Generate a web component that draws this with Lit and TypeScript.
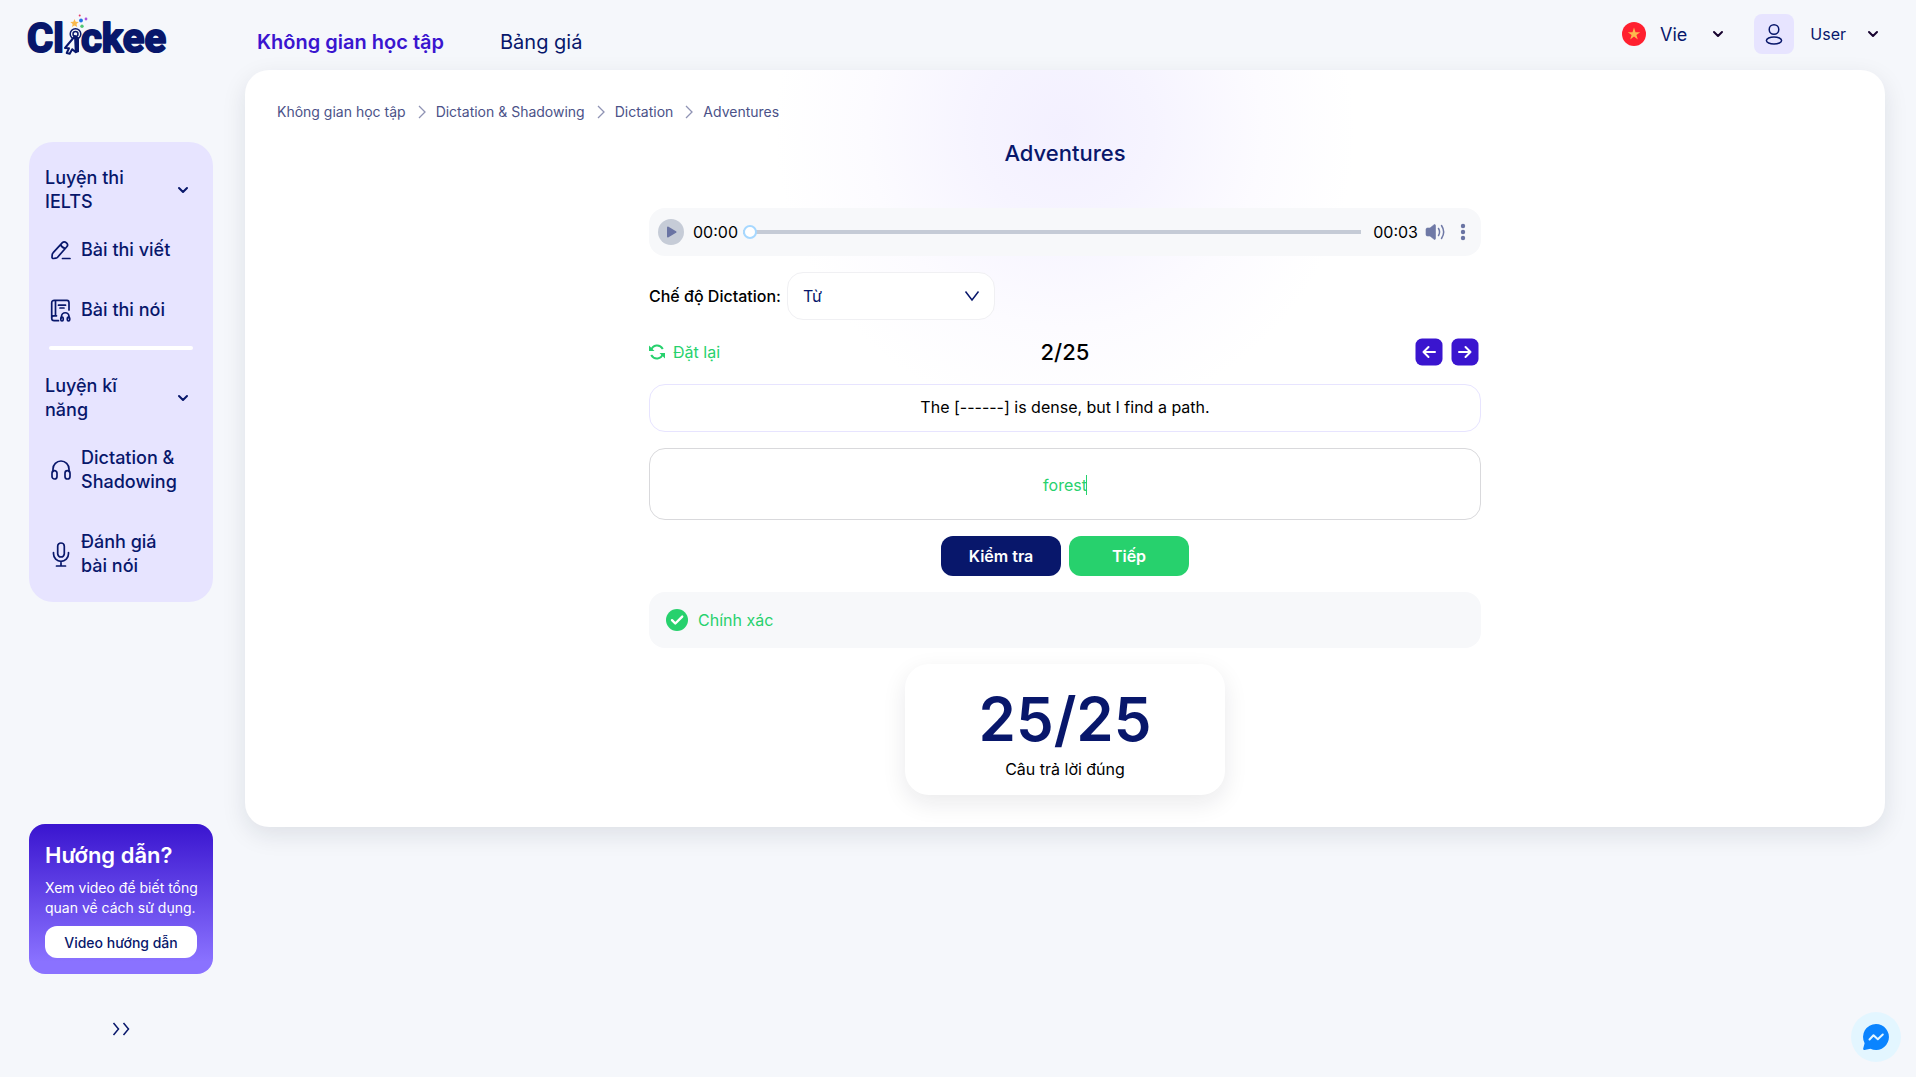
import { LitElement, html, css, svg } from "lit";
import { customElement, state } from "lit/decorators.js";

const chevronDown = html`<svg class="chev" viewBox="0 0 12 12" width="12" height="12" aria-hidden="true">
  <path d="M2 4l4 4 4-4" fill="none" stroke="currentColor" stroke-width="2" stroke-linecap="round" stroke-linejoin="round" />
</svg>`;

const icons: Record<string, unknown> = {
  pen: svg`<path d="M2.200 12.600 11.400 2.600a2.600 2.600 0 0 1 3.700 0l.6.6a2.600 2.600 0 0 1 .1 3.600L6.600 17.200c-.5.6-1 .8-1.700.9l-2.400.4c-.9.1-1.600-.5-1.500-1.400l.2-2.400c.1-.8.4-1.500 1-2.100ZM9.700 4.500c.6 2 2.200 3.500 4.400 3.900M11.500 18.500h7.500"/>`,
  book: svg`<path d="M18 10V2.800C18 1.400 17.300.3 16 .3H3.500C1.500.3.700 1.300.7 3v15.200M4.500.3v15.500M.7 18c0-1.300.9-2.200 2.200-2.200H5.500M.7 18c0 1.600.9 2.700 2.400 2.700H7.500M7.500 5.200h7M9 8h4M10.500 18v-1.500a3.700 3.700 0 0 1 7.500 0V18"/><rect x="9.800" y="17" width="2.400" height="4" rx="1.200"/><rect x="16.300" y="17" width="2.400" height="4" rx="1.200"/>`,
  headphones: svg`<path d="M2 11.500V9a8 8 0 0 1 16 0v2.500"/><rect x="1" y="10.700" width="5" height="8.300" rx="2.500"/><rect x="14" y="10.700" width="5" height="8.300" rx="2.500"/>`,
  mic: svg`<rect x="6.700" y="-1" width="6.600" height="14" rx="3.300"/><path d="M2.500 8.500v1.300a7.500 7.500 0 0 0 15 0V8.500M10 17.300v4.500M5.500 22h9"/>`,
};

interface MenuGroup {
  title: string;
  items: { icon: string; label: string }[];
}

const menu: MenuGroup[] = [
  {
    title: "Luyện thi IELTS",
    items: [
      { icon: "pen", label: "Bài thi viết" },
      { icon: "book", label: "Bài thi nói" },
    ],
  },
  {
    title: "Luyện kĩ năng",
    items: [
      { icon: "headphones", label: "Dictation & Shadowing" },
      { icon: "mic", label: "Đánh giá bài nói" },
    ],
  },
];

const base = css`
  *,
  *::before,
  *::after {
    box-sizing: border-box;
  }
  button,
  input,
  select {
    font: inherit;
    color: inherit;
    margin: 0;
  }
  button {
    background: none;
    border: 0;
    padding: 0;
    cursor: pointer;
  }
  a {
    color: inherit;
    text-decoration: none;
  }
  svg {
    display: block;
    flex: none;
    overflow: visible;
  }
`;

@customElement("clickee-header")
class ClickeeHeader extends LitElement {
  static styles = [
    base,
    css`
      :host {
        display: grid;
        grid-template-columns: 245px 1fr auto;
        height: 70px;
        padding-right: 37px;
      }
      .logo {
        display: flex;
        align-items: flex-start;
        padding: 10px 0 0 27px;
      }
      .word {
        font: 700 40px/50px Roboto, "Liberation Sans", sans-serif;
        fill: var(--navy);
        stroke: var(--navy);
        stroke-width: 2px;
        stroke-linejoin: round;
      }
      nav {
        display: flex;
        gap: 56px;
        padding: 27px 0 0 12px;
        font-size: 20px;
        line-height: 30px;
      }
      .active {
        color: var(--violet);
        font-weight: 600;
      }
      .account {
        display: flex;
        gap: 30px;
        padding-top: 14px;
      }
      .drop {
        display: flex;
        align-items: center;
        height: 40px;
        gap: 16px;
        font-size: 16px;
      }
      .chev {
        color: #17032f;
        margin-left: 5px;
      }
      .lang {
        gap: 14px;
        font-size: 18px;
      }
      .lang .chev {
        margin-left: 11px;
      }
      .avatar {
        display: grid;
        place-items: center;
        width: 40px;
        height: 40px;
        border-radius: 8px;
        background: var(--lilac);
      }
    `,
  ];

  render() {
    return html`
      <a class="logo" href="#" aria-label="Clickee">
        <svg width="144" height="50" viewBox="0 0 144 50">
          <text class="word" x="0" y="42">Cl</text>
          <text class="word" x="54" y="42">ckee</text>
          <g fill="none" stroke="#08176b" stroke-width="1.500">
            <circle cx="48.500" cy="24" r="5.300" />
            <circle cx="48.500" cy="24" r="2.500" />
            <path d="M48 26 38 38l4 .3-2.300 4.700 3 .8 2.500-4.600 3.600 3Z" fill="#f5f7fb" stroke-width="2" stroke-linejoin="round" />
          </g>
          <path d="M49 26l3 1.500V42l-3 1Z" fill="#08176b" />
          <path d="m47.500 9 1.200 2.700 3 .3-2.200 2 .7 3-2.700-1.600L45 17l.6-3-2.300-2 3-.3Z" fill="#f9b84b" />
          <circle cx="54" cy="10.500" r="1.900" fill="#1f74e8" />
          <circle cx="55" cy="16.200" r="1.700" fill="#51c774" />
          <circle cx="59" cy="9" r="1.400" fill="#a955df" />
          <circle cx="52.700" cy="5.500" r="1" fill="#e63a66" />
        </svg>
      </a>
      <nav>
        <a class="active" href="#learn">Không gian học tập</a>
        <a href="#pricing">Bảng giá</a>
      </nav>
      <div class="account">
        <button class="drop lang">
          <svg width="24" height="24" viewBox="0 0 24 24" aria-hidden="true">
            <circle cx="12" cy="12" r="12" fill="#ff202f" />
            <path d="m12 5.600 1.500 4.600h4.700l-3.800 2.700 1.400 4.500-3.800-2.800-3.800 2.800 1.400-4.500-3.800-2.700h4.700Z" fill="#fdb94d" />
          </svg>
          Vie ${chevronDown}
        </button>
        <button class="drop">
          <span class="avatar">
            <svg width="18" height="22" viewBox="0 0 18 22" fill="none" stroke="#08176b" stroke-width="1.500" aria-hidden="true">
              <circle cx="9" cy="6.500" r="4.800" />
              <ellipse cx="9" cy="17.500" rx="7.600" ry="3.600" />
            </svg>
          </span>
          User ${chevronDown}
        </button>
      </div>
    `;
  }
}

@customElement("clickee-sidebar")
class ClickeeSidebar extends LitElement {
  static styles = [
    base,
    css`
      :host {
        display: flex;
        flex-direction: column;
        padding: 72px 32px 24px 29px;
      }
      .menu {
        padding: 0 16px;
        border-radius: 24px;
        background: var(--lilac);
        font-size: 18px;
        font-weight: 500;
        line-height: 24px;
      }
      .group {
        padding: 24px 0 6px;
      }
      .group + .group::before {
        content: "";
        display: block;
        height: 4px;
        margin: -24px 4px 24px;
        border-radius: 2px;
        background: #fff;
      }
      .title {
        display: flex;
        align-items: center;
        gap: 20px;
        width: 100%;
        padding-right: 8px;
        margin-bottom: 6px;
        text-align: left;
      }
      .title span {
        flex: 1;
      }
      .item {
        display: flex;
        align-items: center;
        gap: 10px;
        padding: 18px 16px 18px 6px;
      }
      .guide {
        margin-top: auto;
        display: flex;
        flex-direction: column;
        gap: 8px;
        padding: 16px;
        border-radius: 16px;
        background: linear-gradient(#3a15cf, #8a72ff 92%);
        color: #fff;
      }
      h2,
      p {
        margin: 0;
      }
      h2 {
        font-size: 22px;
        font-weight: 600;
        line-height: 30px;
      }
      p {
        font-size: 14px;
        line-height: 20px;
        white-space: nowrap;
      }
      .video {
        height: 32px;
        border-radius: 12px;
        background: #fff;
        color: var(--navy);
        font-size: 14px;
        font-weight: 500;
      }
      .collapse {
        display: grid;
        place-items: center;
        height: 48px;
        margin-top: 31px;
      }
    `,
  ];

  render() {
    return html`
      <nav class="menu">
        ${menu.map(
          (group) => html`<div class="group">
            <button class="title"><span>${group.title}</span>${chevronDown}</button>
            ${group.items.map(
              (item) => html`<a class="item" href="#">
                <svg width="20" height="20" viewBox="0 0 20 20" fill="none" stroke="currentColor" stroke-width="1.700" stroke-linecap="round" stroke-linejoin="round" aria-hidden="true">${icons[item.icon]}</svg>
                <span>${item.label}</span>
              </a>`
            )}
          </div>`
        )}
      </nav>
      <section class="guide">
        <h2>Hướng dẫn?</h2>
        <p>Xem video để biết tổng<br />quan về cách sử dụng.</p>
        <button class="video">Video hướng dẫn</button>
      </section>
      <button class="collapse" aria-label="Mở rộng">
        <svg width="18" height="12" viewBox="0 0 18 12" fill="none" stroke="#08176b" stroke-width="1.500">
          <path d="m1.500 0 5 6-5 6M11.500 0l5 6-5 6" />
        </svg>
      </button>
    `;
  }
}

@customElement("dictation-panel")
class DictationPanel extends LitElement {
  static styles = [
    base,
    css`
      :host {
        display: block;
        padding: 32px;
        border-radius: 24px;
        background: radial-gradient(circle 290px at 50% 60px, #f3f0ff, #f6f4ff 30%, #fcfbff 68%, #fff) #fff;
        box-shadow: 0 8px 24px rgba(20, 25, 50, 0.1);
        color: #000;
        font-size: 16px;
        line-height: 24px;
      }
      .crumbs {
        display: flex;
        align-items: center;
        font-size: 14px;
        line-height: 20px;
        color: #4b5288;
      }
      h1 {
        margin: 16px 0 40px;
        text-align: center;
        font-size: 22px;
        line-height: 30px;
        font-weight: 500;
        color: var(--navy);
      }
      .exercise {
        display: flex;
        flex-direction: column;
        gap: 16px;
        max-width: 832px;
        margin: 0 auto;
      }
      .player {
        display: flex;
        align-items: center;
        height: 48px;
        padding: 0 15px 0 9px;
        border-radius: 16px;
        background: #f7f8fa;
      }
      .time {
        margin: 0 5px 0 9px;
      }
      .total {
        margin: 0 7px 0 12px;
      }
      .seek {
        flex: 1;
        min-width: 0;
        height: 14px;
        appearance: none;
        background: linear-gradient(#c5cbd6, #c5cbd6) center / 100% 4px no-repeat;
        border-radius: 2px;
      }
      .seek::-webkit-slider-thumb {
        appearance: none;
        width: 14px;
        height: 14px;
        border: 2px solid #a6d8ff;
        border-radius: 50%;
        background: #fff;
      }
      .more {
        margin-left: 15px;
      }
      .mode {
        display: flex;
        align-items: center;
        gap: 6px;
      }
      .mode label {
        font-weight: 500;
      }
      .picker {
        display: grid;
        align-items: center;
        width: 208px;
      }
      .picker > * {
        grid-area: 1 / 1;
      }
      select {
        appearance: none;
        width: 100%;
        height: 48px;
        padding: 0 15px;
        border: 1px solid #f0f0f3;
        border-radius: 16px;
        background: #fff;
        color: var(--navy);
      }
      .picker svg {
        justify-self: end;
        margin-right: 16px;
        pointer-events: none;
      }
      .bar {
        display: grid;
        grid-template-columns: 1fr auto 1fr;
        align-items: center;
        height: 32px;
      }
      .reset {
        display: flex;
        align-items: center;
        gap: 8px;
        color: var(--green);
        justify-self: start;
      }
      .count {
        font-size: 22px;
        font-weight: 500;
      }
      .steps {
        display: flex;
        gap: 4px;
        justify-self: end;
      }
      .sentence {
        margin: 0;
        padding: 10px 12px 12px;
        border: 1px solid var(--lilac);
        border-radius: 16px;
        background: #fff;
        text-align: center;
      }
      .field {
        position: relative;
        display: flex;
      }
      .answer {
        width: 100%;
        height: 72px;
        padding: 2px 12px 0;
        border: 1px solid #d9d9dc;
        border-radius: 16px;
        outline: 0;
        background: #fff;
        text-align: center;
        color: var(--green);
      }
      .caret {
        position: absolute;
        left: calc(50% + 21px);
        top: 27px;
        width: 1px;
        height: 20px;
        background: var(--green);
      }
      .actions {
        display: flex;
        justify-content: center;
        gap: 8px;
      }
      .action {
        width: 120px;
        height: 40px;
        border-radius: 12px;
        background: var(--navy);
        color: #fff;
        font-weight: 600;
      }
      .next {
        background: var(--green);
      }
      .result {
        display: flex;
        align-items: center;
        gap: 9px;
        padding: 16px;
        border-radius: 16px;
        background: #f7f8fa;
        color: var(--green);
      }
      .score {
        width: 320px;
        align-self: center;
        padding: 18px 16px 14px;
        border-radius: 24px;
        background: #fff;
        box-shadow: 0 8px 24px rgba(20, 20, 40, 0.09);
        text-align: center;
      }
      .score strong {
        display: block;
        font-size: 60px;
        line-height: 75px;
        font-weight: 600;
        color: var(--navy);
      }
    `,
  ];

  @state() private answer = "forest";

  private crumbs = ["Không gian học tập", "Dictation & Shadowing", "Dictation", "Adventures"];

  private stepButton(label: string, path: string) {
    return html`<button aria-label=${label}>
      <svg width="32" height="32" viewBox="0 0 32 32" fill="none">
        <rect x="2.500" y="2.500" width="27" height="27" rx="6.500" fill="#3a15cf" />
        <path d=${path} stroke="#fff" stroke-width="2" stroke-linecap="round" stroke-linejoin="round" />
      </svg>
    </button>`;
  }

  render() {
    return html`
      <nav class="crumbs">
        ${this.crumbs.map(
          (crumb, i) => html`${i
              ? html`<svg width="30" height="14" viewBox="0 0 30 14" fill="none" stroke="#8f93b4" stroke-width="1.300" aria-hidden="true"><path d="m13 1 6 6-6 6" /></svg>`
              : ""}<a href="#">${crumb}</a>`
        )}
      </nav>
      <h1>Adventures</h1>
      <div class="exercise">
        <div class="player">
          <button aria-label="Phát">
            <svg width="26" height="26" viewBox="0 0 26 26">
              <circle cx="13" cy="13" r="13" fill="#c6ccd7" />
              <path d="M10 8.500 17.500 13 10 17.500Z" fill="#6a74a3" stroke="#6a74a3" stroke-width="2" stroke-linejoin="round" />
            </svg>
          </button>
          <span class="time">00:00</span>
          <input class="seek" type="range" min="0" max="3" value="0" aria-label="Vị trí phát" />
          <span class="total">00:03</span>
          <button aria-label="Âm lượng">
            <svg width="20" height="18" viewBox="0 0 20 18" fill="none" stroke="#6f79a6" stroke-width="1.500" stroke-linecap="round">
              <path d="M1 6.500C1 5.500 1.500 5 2.500 5H5l4-3.200c.8-.6 1.500-.2 1.500.7v13c0 .9-.7 1.300-1.500.7L5 13H2.500C1.500 13 1 12.500 1 11.500Z" fill="#6f79a6" stroke="#6f79a6" stroke-width=".6" />
              <path d="M13.500 5.500c1.400 2.300 1.400 4.700 0 7M16.500 2.500c2.900 4.300 2.900 8.700 0 13" />
            </svg>
          </button>
          <button class="more" aria-label="Tùy chọn">
            <svg width="6" height="18" viewBox="0 0 6 18" fill="#6a74a3">
              <circle cx="3" cy="3" r="2.200" /><circle cx="3" cy="9" r="2.200" /><circle cx="3" cy="15" r="2.200" />
            </svg>
          </button>
        </div>

        <div class="mode">
          <label for="mode">Chế độ Dictation:</label>
          <div class="picker">
            <select id="mode">
              <option>Từ</option>
              <option>Câu</option>
            </select>
            <svg width="14" height="10" viewBox="0 0 14 10" fill="none" stroke="#08176b" stroke-width="1.500"><path d="m.5.500 6.500 8.500 6.500-8.500" /></svg>
          </div>
        </div>

        <div class="bar">
          <button class="reset">
            <svg width="16" height="16" viewBox="0 0 16 16" fill="none" stroke="currentColor" stroke-width="2" aria-hidden="true">
              <path d="M2 6.500C3.700.500 10.700-.2 13.800 5M14 9.500C12.300 15.500 5.300 16.200 2.200 11" />
              <path d="M0 1.500v5.500h5.500ZM16 14.500V9h-5.500Z" fill="currentColor" stroke="none" />
            </svg>
            Đặt lại
          </button>
          <span class="count">2/25</span>
          <div class="steps">
            ${this.stepButton("Câu trước", "M22 16H10.500M15.500 11l-5 5 5 5")}
            ${this.stepButton("Câu sau", "M10 16h11.500M16.500 11l5 5-5 5")}
          </div>
        </div>

        <p class="sentence">The [------] is dense, but I find a path.</p>
        <div class="field">
          <input
            class="answer"
            aria-label="Câu trả lời"
            .value=${this.answer}
            @input=${(e: Event) => (this.answer = (e.target as HTMLInputElement).value)}
          />
          <span class="caret"></span>
        </div>
        <div class="actions">
          <button class="action">Kiểm tra</button>
          <button class="action next">Tiếp</button>
        </div>
        <div class="result" role="status">
          <svg width="24" height="24" viewBox="0 0 24 24" fill="none">
            <circle cx="12" cy="12" r="11" fill="#27d16d" />
            <path d="m7 12.200 3.300 3.300L17.200 8.600" stroke="#fff" stroke-width="2.400" stroke-linecap="round" stroke-linejoin="round" />
          </svg>
          Chính xác
        </div>
        <div class="score"><strong>25/25</strong>Câu trả lời đúng</div>
      </div>
    `;
  }
}

@customElement("app-root")
class AppRoot extends LitElement {
  static styles = [
    base,
    css`
      :host {
        --navy: #08176b;
        --violet: #3a15cf;
        --lilac: #e7e4ff;
        --green: #27d16d;
        display: flex;
        flex-direction: column;
        min-height: 100vh;
        background: #f5f7fb;
        color: var(--navy);
        font-family: Inter, "Liberation Sans", sans-serif;
      }
      .body {
        flex: 1;
        display: grid;
        grid-template-columns: 245px minmax(0, 1fr);
        padding-right: 31px;
      }
      .panel {
        align-self: start;
      }
      .chat {
        position: fixed;
        right: 15px;
        bottom: 15px;
        display: grid;
        place-items: center;
        width: 50px;
        height: 50px;
        border-radius: 50%;
        background: #e3f6ff;
      }
    `,
  ];

  render() {
    return html`
      <clickee-header></clickee-header>
      <div class="body">
        <clickee-sidebar></clickee-sidebar>
        <dictation-panel class="panel"></dictation-panel>
      </div>
      <a class="chat" href="#" aria-label="Messenger">
        <svg width="26" height="26" viewBox="0 0 26 26" fill="none">
          <path d="M13 0a13 13 0 1 1-5.500 24.800L1.500 26C.5 26.200-.1 25.500.2 24.600L1.600 19.200A13 13 0 0 1 13 0Z" fill="#0a84ff" />
          <path d="m6.500 15.500 4-4.300 4.300 4 5-4.700" stroke="#e3f6ff" stroke-width="2" stroke-linecap="round" stroke-linejoin="round" />
        </svg>
      </a>
    `;
  }
}
